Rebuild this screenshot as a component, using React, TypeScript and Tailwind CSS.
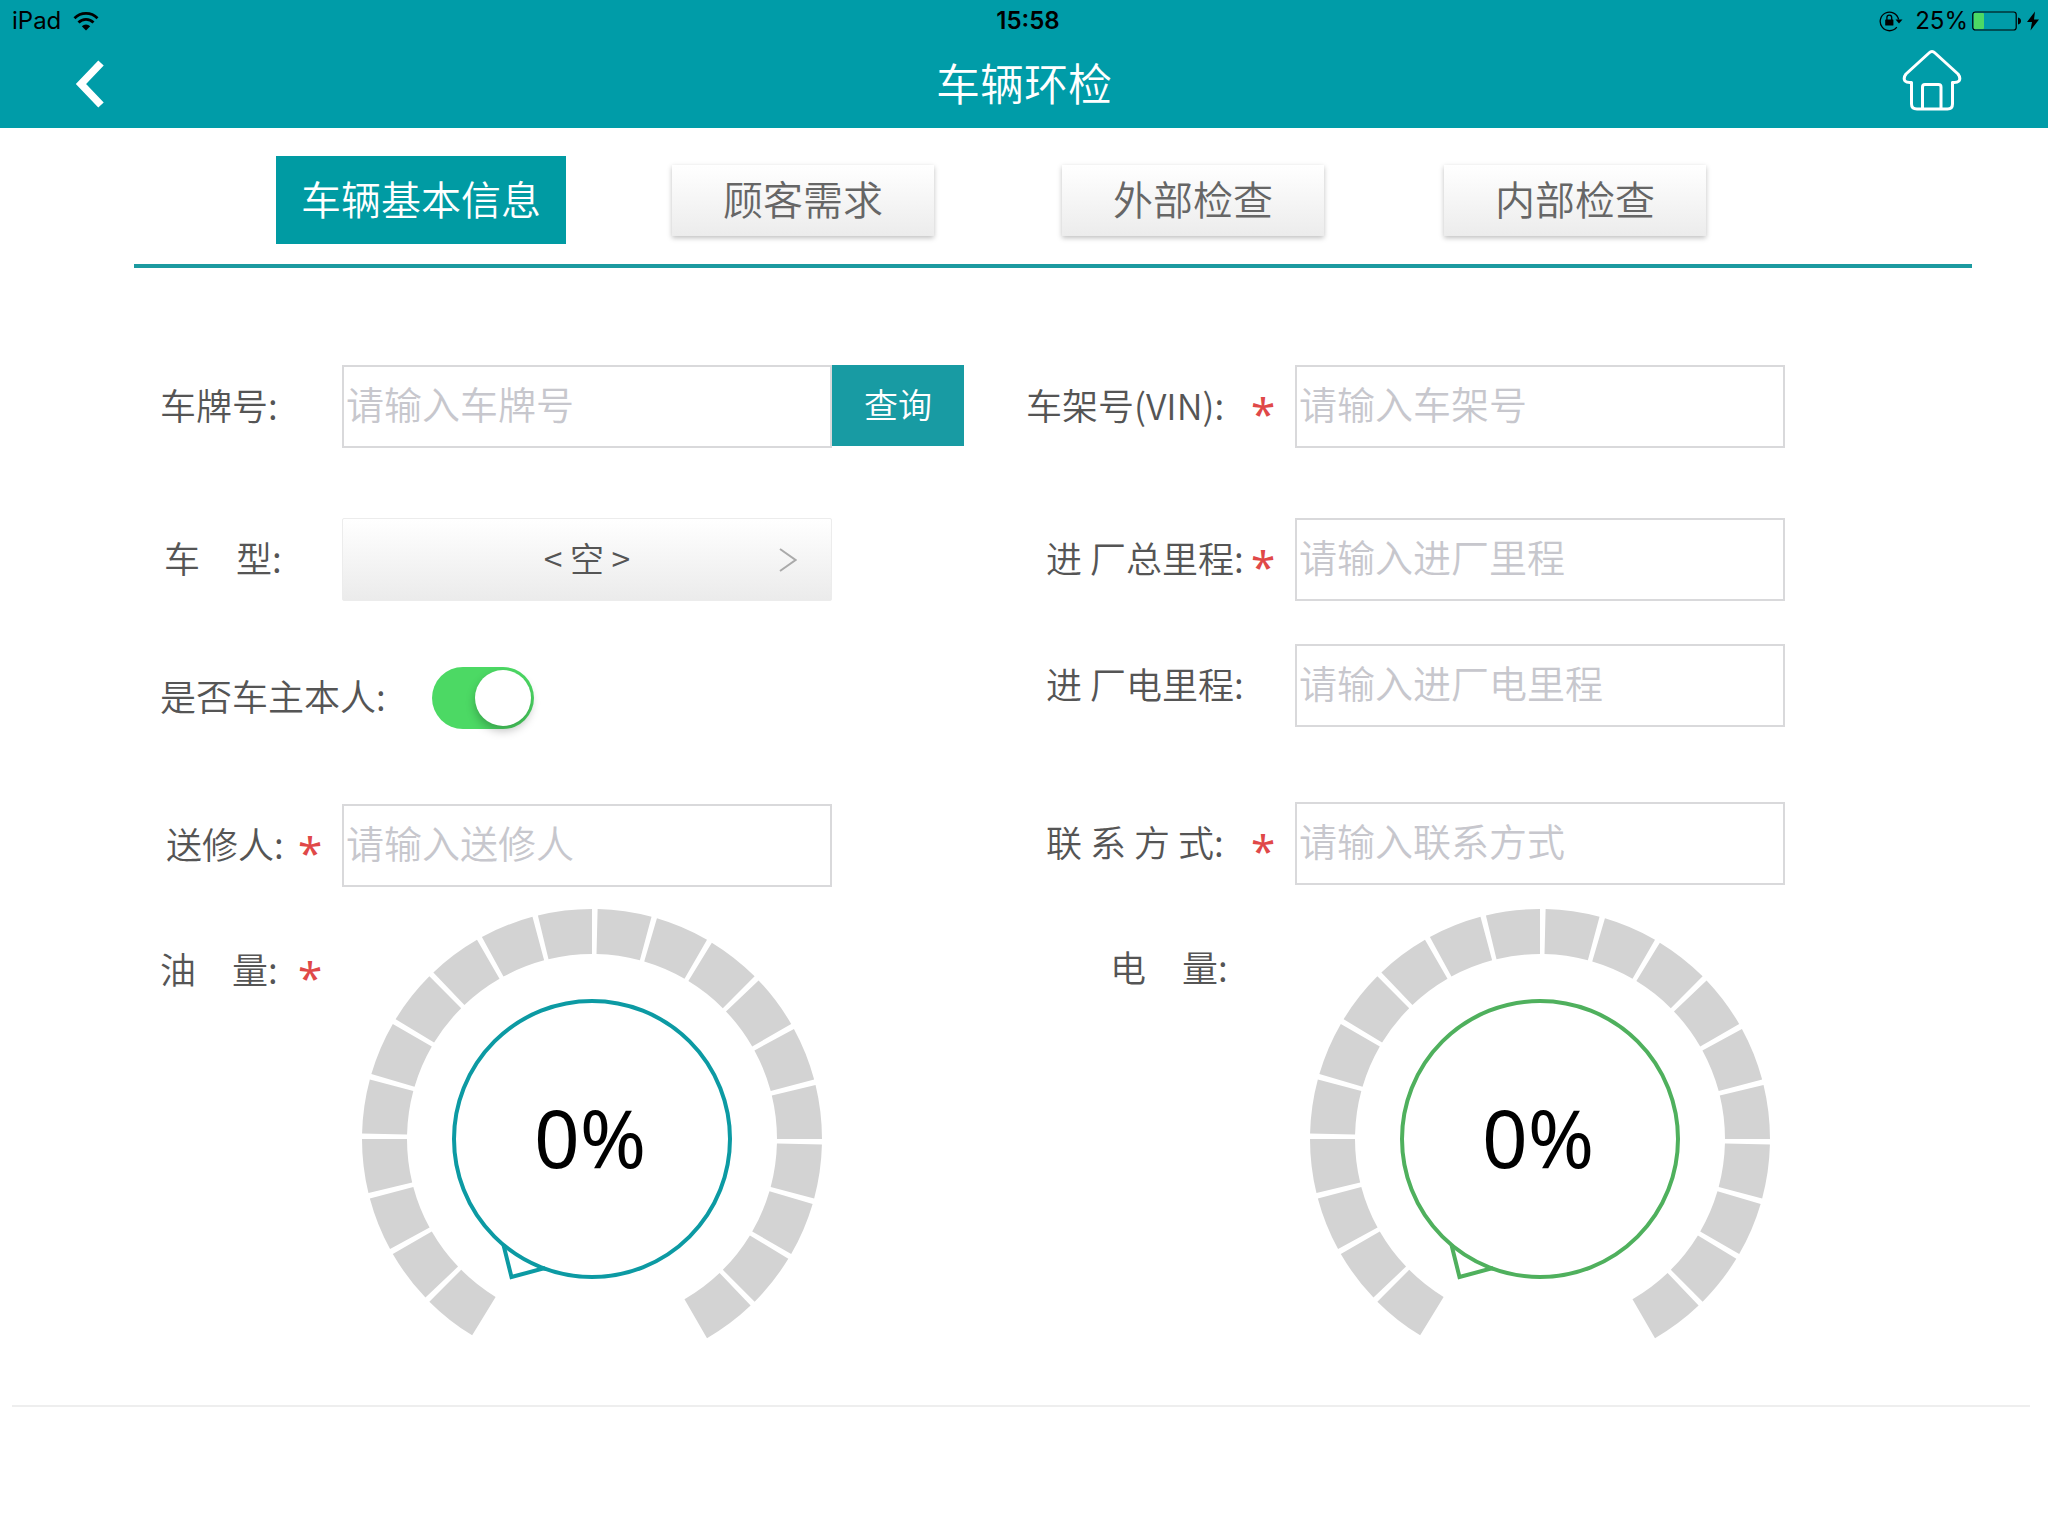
import { useState } from "react";
import type { ReactNode } from "react";

const tabs = ["车辆基本信息", "顾客需求", "外部检查", "内部检查"];

const SEGMENTS = 20;
const SEGMENT_ANGLE = 15;
const SEGMENT_GAP = 1.4;

function polar(radius: number, degrees: number) {
  const rad = (degrees * Math.PI) / 180;
  return `${(radius * Math.cos(rad)).toFixed(2)} ${(radius * Math.sin(rad)).toFixed(2)}`;
}

// the ring opens at the bottom, 30 degrees to each side
function segmentPath(index: number) {
  const from = 120 + index * SEGMENT_ANGLE + SEGMENT_GAP;
  const to = 120 + (index + 1) * SEGMENT_ANGLE;
  return `M${polar(230, from)}A230 230 0 0 1 ${polar(230, to)}L${polar(185, to)}A185 185 0 0 0 ${polar(185, from)}Z`;
}

function Gauge({ value, color, label }: { value: number; color: string; label: string }) {
  const filled = Math.round((value / 100) * SEGMENTS);
  return (
    <svg
      viewBox="-230 -230 460 460"
      className="h-[460px] w-[460px] shrink-0"
      role="img"
      aria-label={label}
    >
      {Array.from({ length: SEGMENTS }, (_, i) => (
        <path key={i} d={segmentPath(i)} fill={i < filled ? color : "#d3d3d3"} />
      ))}
      <circle r="138" fill="none" stroke={color} strokeWidth="4" />
      <path d="M-88.500 106L-80.500 138L-47 129" fill="none" stroke={color} strokeWidth="4" />
      <text
        x="-2"
        y="29"
        textAnchor="middle"
        fill="#000"
        className="font-['Noto_Sans',sans-serif] text-[80px] font-normal"
      >
        {value}%
      </text>
    </svg>
  );
}

function StatusBar() {
  return (
    <div className="grid h-10 grid-cols-3 items-center pt-0.5 pr-2 pl-3 font-['Inter',sans-serif] text-[24px] leading-[38px] font-normal text-black">
      <div className="flex items-center gap-3">
        <span>iPad</span>
        <svg viewBox="0 0 26 20" className="h-5 w-[26px]" aria-hidden="true">
          <g fill="none" stroke="#000" strokeWidth="2.800">
            <path d="M1.500 7.200A16.300 16.300 0 0 1 24.500 7.200" />
            <path d="M5.500 11.400A10.600 10.600 0 0 1 20.500 11.400" />
          </g>
          <path d="M13 19.500L8.800 15.200A6 6 0 0 1 17.200 15.200Z" />
        </svg>
      </div>
      <div className="pl-1 text-center font-semibold">15:58</div>
      <div className="flex items-center justify-end">
        <svg viewBox="0 0 24 22" className="mr-3 h-[22px] w-6" aria-hidden="true">
          <path
            d="M17.800 17.200A9.300 9.300 0 1 1 19.600 9.500"
            fill="none"
            stroke="#000"
            strokeWidth="1.300"
          />
          <path d="M16.500 9.500H23.500L20 13.500Z" />
          <rect x="6.200" y="9.500" width="8.200" height="6" rx="0.600" />
          <path d="M7.900 10V7.500A2.400 2.400 0 0 1 12.700 7.500V10" fill="none" stroke="#000" strokeWidth="1.300" />
        </svg>
        <span className="mr-1">25%</span>
        <svg viewBox="0 0 50 20" className="mr-1 h-5 w-[50px]" aria-hidden="true">
          <rect x="0.800" y="1" width="43.400" height="18" rx="2.500" fill="none" stroke="#000" strokeWidth="1.200" />
          <rect x="1.800" y="2" width="10.200" height="16" rx="1" fill="#4cd964" />
          <path d="M46 6.500C50 7 50 13 46 13.500Z" />
        </svg>
        <svg viewBox="0 0 14 20" className="h-5 w-3.5" aria-hidden="true">
          <path d="M9 0.500L1 11H6L4.500 19.500L13 8.500H8Z" />
        </svg>
      </div>
    </div>
  );
}

function Header() {
  return (
    <header className="bg-[#009ca8]">
      <StatusBar />
      <div className="grid h-[88px] grid-cols-3 items-center px-[74px]">
        <button type="button" aria-label="返回" className="justify-self-start">
          <svg viewBox="0 0 32 52" className="h-[52px] w-8" fill="none" stroke="#fff" strokeWidth="7.500">
            <path d="M27 5L7 26L27 47" />
          </svg>
        </button>
        <h1 className="pb-1 text-center text-[44px] leading-[60px] text-white">车辆环检</h1>
        <button type="button" aria-label="首页" className="justify-self-end pr-3 pb-2">
          <svg
            viewBox="0 0 60 62"
            className="h-[62px] w-[60px]"
            fill="none"
            stroke="#fff"
            strokeWidth="3"
            strokeLinejoin="round"
          >
            <path d="M27 4Q30 1 33 4L56 25Q59 29 57 32Q55 34 50.500 33.500V55Q50.500 60 45.500 60H15Q9.500 60 9.500 55V33.500Q5 34 3 32Q1 29 4 25Z" />
            <path d="M20.500 60V38Q20.500 35.500 23 35.500H36.500Q39 35.500 39 38V60" />
          </svg>
        </button>
      </div>
    </header>
  );
}

type LabelProps = {
  htmlFor?: string;
  required?: boolean;
  indent?: string;
  children: ReactNode;
};

function Label({ htmlFor, required, indent = "", children }: LabelProps) {
  return (
    <>
      <label
        htmlFor={htmlFor}
        className={["pb-1.5 text-[36px] leading-[54px] whitespace-pre text-[#555]", indent].join(" ")}
      >
        {children}
      </label>
      <span className="h-[54px] font-['Noto_Sans',sans-serif] text-[44px] leading-[66px] font-normal text-[#e04848]">
        {required ? "*" : ""}
      </span>
    </>
  );
}

function TextField({ id, placeholder }: { id: string; placeholder: string }) {
  return (
    <input
      id={id}
      type="text"
      placeholder={placeholder}
      className="h-[83px] w-full min-w-0 border-2 border-[#d9d9db] bg-white px-0.5 pb-2 text-[38px] text-[#333] outline-none placeholder:text-[#c7c7cd]"
    />
  );
}

const leftRow = "grid grid-cols-[138px_44px_1fr_132px] items-center";
const rightRow = "grid grid-cols-[225px_44px_1fr] items-center";

export default function App() {
  const [activeTab, setActiveTab] = useState(0);
  const [isOwner, setIsOwner] = useState(true);

  return (
    <div className="min-h-screen bg-white font-['Noto_Sans_CJK_SC',sans-serif] font-[350]">
      <Header />

      <nav className="mr-[76px] ml-[134px] grid h-[140px] grid-cols-[382fr_382fr_398fr_366fr] items-center justify-items-center border-b-4 border-[#1c9aa0] pt-2 pr-[214px] pl-[96px]">
        {tabs.map((tab, i) => (
          <button
            key={tab}
            type="button"
            onClick={() => setActiveTab(i)}
            aria-pressed={i === activeTab}
            className={[
              "pb-1 text-[40px] leading-[60px]",
              i === activeTab
                ? "h-[88px] w-[290px] bg-[#009ba3] text-white"
                : "h-[71px] w-[262px] bg-linear-to-b from-white to-[#ececec] text-[#666] shadow-[0_2px_5px_rgba(0,0,0,0.25)]",
            ].join(" ")}
          >
            {tab}
          </button>
        ))}
      </nav>

      <main className="grid grid-cols-[804fr_759fr] gap-[62px] pt-[97px] pr-[263px] pl-[160px]">
        <section>
          <div className={leftRow}>
            <Label htmlFor="plate">车牌号:</Label>
            <TextField id="plate" placeholder="请输入车牌号" />
            <button type="button" className="h-[81px] self-start bg-[#189ba3] pb-1 text-[34px] text-white">
              查询
            </button>
          </div>

          <div className={`${leftRow} mt-[70px]`}>
            <Label htmlFor="model" indent="pl-1">车　型:</Label>
            <button
              id="model"
              type="button"
              className="grid h-[83px] grid-cols-[52px_1fr_52px] items-center rounded-xs border border-[#ececec] bg-linear-to-b from-white to-[#ebebeb] text-[34px] text-[#555]"
            >
              <span className="col-start-2 pb-1">&lt; 空 &gt;</span>
              <svg viewBox="0 0 18 24" className="h-6 w-[18px]" fill="none" stroke="#aaa" strokeWidth="2">
                <path d="M1 1L16.500 12L1 23" />
              </svg>
            </button>
          </div>

          <div className="mt-[66px] flex h-[62px] items-center gap-[46px]">
            <label htmlFor="owner" className="pb-1.5 text-[36px] leading-[54px] text-[#555]">
              是否车主本人:
            </label>
            <input
              id="owner"
              type="checkbox"
              role="switch"
              checked={isOwner}
              onChange={(e) => setIsOwner(e.target.checked)}
              className="flex h-[62px] w-[102px] appearance-none items-center rounded-full bg-[#e5e5e5] px-[3px] before:h-14 before:w-14 before:rounded-full before:bg-white before:shadow-[0_5px_10px_rgba(0,0,0,0.25)] before:content-[''] checked:justify-end checked:bg-[#4cd964]"
            />
          </div>

          <div className={`${leftRow} mt-[75px]`}>
            <Label htmlFor="sender" indent="pl-1.5" required>送修人:</Label>
            <TextField id="sender" placeholder="请输入送修人" />
          </div>

          <div className="mt-[22px] grid grid-cols-[138px_44px_1fr] items-start">
            <div className="col-span-2 grid grid-cols-subgrid items-center pt-8">
              <Label required>油　量:</Label>
            </div>
            <div className="pl-5">
              <Gauge value={0} color="#0c9aa3" label="油量" />
            </div>
          </div>
        </section>

        <section>
          <div className={rightRow}>
            <Label htmlFor="vin" required>车架号(VIN):</Label>
            <TextField id="vin" placeholder="请输入车架号" />
          </div>

          <div className={`${rightRow} mt-[70px]`}>
            <Label htmlFor="mileage" indent="pl-5" required>进 厂总里程:</Label>
            <TextField id="mileage" placeholder="请输入进厂里程" />
          </div>

          <div className={`${rightRow} mt-[43px]`}>
            <Label htmlFor="electric" indent="pl-5">进 厂电里程:</Label>
            <TextField id="electric" placeholder="请输入进厂电里程" />
          </div>

          <div className={`${rightRow} mt-[75px]`}>
            <Label htmlFor="contact" indent="pl-5" required>联 系 方 式:</Label>
            <TextField id="contact" placeholder="请输入联系方式" />
          </div>

          <div className="mt-6 grid grid-cols-[225px_44px_1fr] items-start">
            <div className="col-span-2 grid grid-cols-subgrid items-center pt-[30px]">
              <Label indent="pl-[84px]">电　量:</Label>
            </div>
            <div className="pl-[15px]">
              <Gauge value={0} color="#4fb05d" label="电量" />
            </div>
          </div>
        </section>
      </main>

      <hr className="mt-9 mr-[18px] ml-3 border-t-2 border-[#eee]" />
    </div>
  );
}
